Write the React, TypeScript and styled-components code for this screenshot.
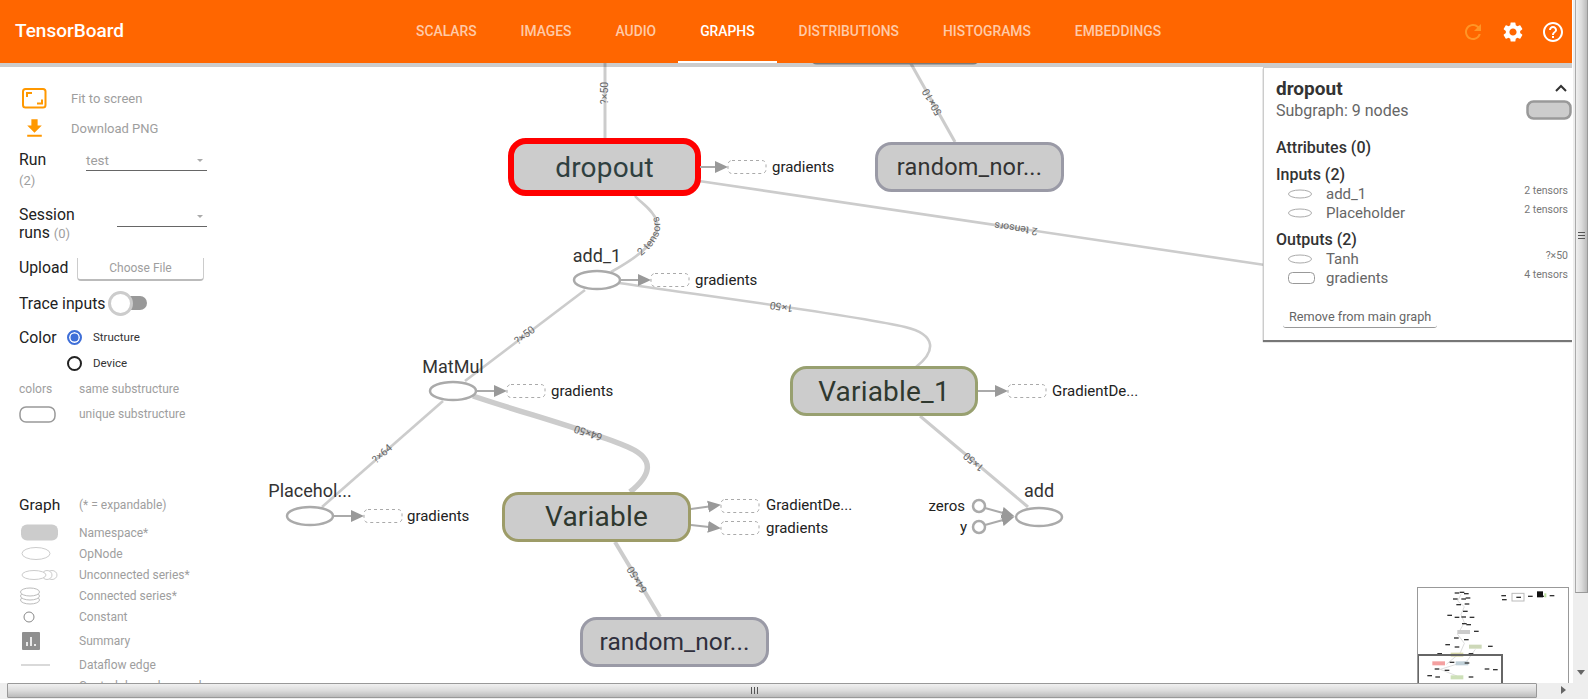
import React, { FC } from "react"
import styled, { createGlobalStyle } from "styled-components"
import { MdFileDownload, MdHelpOutline, MdRefresh, MdSettings } from "react-icons/md"

const GlobalStyle = createGlobalStyle`
  html, body {
    margin: 0;
    height: 100%;
    overflow: hidden;
    background: #fff;
    font-family: Roboto, "Liberation Sans", sans-serif;
  }
  #root { height: 100%; }
`

const Page = styled.div`
  display: grid;
  grid-template-columns: 1fr 16px;
  grid-template-rows: 1fr 16px;
  height: 699px;
  width: 1588px;
  overflow: hidden;
`

const Main = styled.div`
  display: flex;
  flex-direction: column;
  min-height: 0;
  min-width: 0;
  overflow: hidden;
`

const Header = styled.header`
  position: relative;
  z-index: 3;
  flex: 0 0 63px;
  display: flex;
  align-items: stretch;
  background: #ff6600;
  box-shadow: 0 4px 0 rgba(0, 0, 0, 0.2);
`

const Title = styled.div`
  flex: 0 0 394px;
  box-sizing: border-box;
  padding-left: 15px;
  line-height: 62px;
  font-size: 19px;
  font-weight: 500;
  color: #fff;
`

const Tabs = styled.nav`
  display: flex;
`

const Tab = styled.div<{ $active?: boolean }>`
  padding: 0 22px;
  line-height: 62px;
  font-size: 13.87px;
  font-weight: 500;
  text-transform: uppercase;
  color: ${({ $active }) => ($active ? "#fff" : "rgba(255, 255, 255, 0.66)")};
  border-bottom: 2px solid ${({ $active }) => ($active ? "#fff" : "transparent")};
  height: 61px;
`

const HeaderIcons = styled.div`
  margin-left: auto;
  display: flex;
  align-items: center;
  gap: 16px;
  padding-right: 7px;
  font-size: 24px;
  color: #fff;
  svg { display: block; }
`

const RefreshIcon = styled(MdRefresh)`
  color: #ff9526;
`

const Body = styled.div`
  flex: 1;
  display: flex;
  min-height: 0;
  position: relative;
`

const Sidebar = styled.aside`
  flex: 0 0 238px;
  box-sizing: border-box;
  padding: 20px 0 0 19px;
  overflow: hidden;
  background: #fff;
  font-size: 15.8px;
  color: #222;
`

const ToolRow = styled.div`
  display: flex;
  align-items: center;
  height: 30px;
  margin-left: 2px;
  font-size: 13px;
  color: #9e9e9e;
`

const ToolIcon = styled.span`
  flex: 0 0 50px;
  display: flex;
  padding-left: 1px;
  box-sizing: border-box;
  svg { display: block; }
`

const ControlRow = styled.div<{ $top: number }>`
  display: flex;
  align-items: flex-start;
  margin-top: ${({ $top }) => $top}px;
  width: 188px;
`

const FieldLabel = styled.div<{ $width: number; $line?: number }>`
  flex: 0 0 ${({ $width }) => $width}px;
  line-height: ${({ $line }) => $line ?? 20}px;
`

const Count = styled.span`
  color: #9e9e9e;
  font-size: 13px;
`

const SelectBox = styled.div`
  flex: 1;
  height: 20px;
  display: flex;
  align-items: center;
  border-bottom: 1px solid #666;
  font-size: 13.5px;
  color: #9e9e9e;
  &::after {
    content: "";
    margin: 0 4px 0 auto;
    border-left: 3.5px solid transparent;
    border-right: 3.5px solid transparent;
    border-top: 3.5px solid #aaa;
  }
`

const ChooseButton = styled.div`
  flex: 0 0 127px;
  box-sizing: border-box;
  height: 23px;
  margin-left: -2px;
  text-align: center;
  line-height: 20px;
  font-size: 12px;
  color: #9e9e9e;
  border: 1px solid #ccc;
  border-top: none;
  border-bottom: 2px solid #bbb;
  border-radius: 0 0 4px 4px;
`

const ToggleRow = styled.div`
  display: flex;
  align-items: center;
  height: 24px;
  margin-top: 10px;
`

const Toggle = styled.span`
  position: relative;
  margin-left: 14px;
  width: 27px;
  height: 14px;
  border-radius: 7px;
  background: #999;
  &::before {
    content: "";
    position: absolute;
    left: -12px;
    top: -5px;
    width: 19px;
    height: 19px;
    border-radius: 50%;
    background: #fff;
    border: 3px solid #ccc;
  }
`

const RadioRow = styled.div<{ $top?: number }>`
  display: flex;
  align-items: center;
  height: 26px;
  margin-top: ${({ $top }) => $top ?? 0}px;
`

const RadioLabel = styled.div`
  flex: 0 0 48px;
`

const Radio = styled.span<{ $checked?: boolean }>`
  box-sizing: border-box;
  flex: 0 0 15px;
  height: 15px;
  border-radius: 50%;
  border: 2px solid ${({ $checked }) => ($checked ? "#3f6fd8" : "#222")};
  background: ${({ $checked }) => ($checked ? "#3f6fd8" : "#fff")};
  box-shadow: ${({ $checked }) => ($checked ? "inset 0 0 0 1.5px #fff" : "none")};
`

const RadioText = styled.span`
  margin-left: 11px;
  font-size: 11.5px;
  color: #333;
`

const LegendRow = styled.div<{ $height?: number; $top?: number }>`
  display: flex;
  align-items: center;
  height: ${({ $height }) => $height ?? 21}px;
  margin-top: ${({ $top }) => $top ?? 0}px;
  font-size: 12px;
  color: #9e9e9e;
  white-space: nowrap;
`

const LegendKey = styled.span<{ $dark?: boolean }>`
  flex: 0 0 60px;
  display: flex;
  align-items: center;
  font-size: ${({ $dark }) => ($dark ? "15.5px" : "12px")};
  color: ${({ $dark }) => ($dark ? "#222" : "#9e9e9e")};
  svg { display: block; }
`

const Canvas = styled.div`
  flex: 1;
  position: relative;
  min-width: 0;
  overflow: hidden;
  svg { display: block; }
`

const EdgeLine = styled.path<{ $width?: number }>`
  fill: none;
  stroke: #ccc;
  stroke-width: ${({ $width }) => $width ?? 2.6}px;
`

const EdgeLabel = styled.text`
  font-size: 10.5px;
  fill: #666;
  text-anchor: middle;
`

const NodeRect = styled.rect<{ $stroke: string; $width?: number }>`
  fill: #ccc;
  stroke: ${({ $stroke }) => $stroke};
  stroke-width: ${({ $width }) => $width ?? 3}px;
`

const NodeTitle = styled.text<{ $fill: string; $size?: number; $spacing?: number }>`
  font-size: ${({ $size }) => $size ?? 28}px;
  letter-spacing: ${({ $spacing }) => $spacing ?? 0.2}px;
  text-anchor: middle;
  fill: ${({ $fill }) => $fill};
`

const OpEllipse = styled.ellipse`
  fill: #fff;
  stroke: #aaa;
  stroke-width: 2.5px;
`

const OpLabel = styled.text`
  font-size: 18px;
  text-anchor: middle;
  fill: #333;
`

const StubLine = styled.path`
  fill: none;
  stroke: #aaa;
  stroke-width: 2px;
  marker-end: url(#arrowhead);
`

const StubBox = styled.rect`
  fill: #fff;
  stroke: #aaa;
  stroke-width: 1px;
  stroke-dasharray: 3 3;
`

const StubLabel = styled.text<{ $anchor?: string }>`
  font-size: 15px;
  fill: #222;
  dominant-baseline: central;
  text-anchor: ${({ $anchor }) => $anchor ?? "start"};
`

const ConstCircle = styled.circle`
  fill: #fff;
  stroke: #aaa;
  stroke-width: 2.5px;
`

const InfoPanel = styled.section`
  position: absolute;
  z-index: 2;
  top: 4px;
  right: 0;
  width: 309px;
  height: 273px;
  box-sizing: border-box;
  padding: 8px 4px 0 12px;
  background: #fff;
  border-left: 1px solid #ccc;
  border-top: 1px solid #ccc;
  box-shadow: 0 2px 1px #777;
  color: #333;
`

const PanelTop = styled.div`
  display: flex;
  justify-content: space-between;
  align-items: center;
  height: 24px;
  font-size: 19px;
  font-weight: 700;
`

const SubRow = styled.div`
  display: flex;
  justify-content: space-between;
  align-items: center;
  height: 20px;
  margin-right: -4px;
  font-size: 16px;
  color: #666;
  svg { display: block; }
`

const SectionTitle = styled.div<{ $top: number }>`
  margin-top: ${({ $top }) => $top}px;
  height: 19px;
  line-height: 20px;
  font-size: 16px;
  font-weight: 500;
`

const NodeRow = styled.div`
  display: flex;
  align-items: center;
  height: 19px;
  padding-left: 12px;
  font-size: 15px;
  color: #666;
  svg { display: block; }
`

const NodeRowIcon = styled.span`
  flex: 0 0 38px;
`

const NodeRowShape = styled.span`
  margin-left: auto;
  margin-top: -6px;
  font-size: 10.5px;
  color: #777;
`

const RemoveButton = styled.div`
  display: inline-block;
  margin: 19px 0 0 7px;
  padding: 0 6px;
  height: 21px;
  line-height: 21px;
  font-size: 12.7px;
  color: #666;
  border-bottom: 1px solid #999;
  border-radius: 0 0 3px 3px;
`

const Minimap = styled.div`
  position: absolute;
  z-index: 2;
  right: 3px;
  bottom: 0;
  width: 152px;
  height: 96px;
  box-sizing: border-box;
  background: #fff;
  border: 1px solid #999;
  border-bottom: none;
  overflow: hidden;
`

const MiniViewport = styled.div`
  position: absolute;
  left: -1px;
  top: 66px;
  width: 82px;
  height: 40px;
  border: 2px solid #666;
  border-bottom: none;
`

const VerticalBar = styled.div`
  display: flex;
  flex-direction: column;
  background: #eee;
  border-left: 1px solid #fff;
`

const VerticalThumb = styled.div`
  flex: 0 0 593px;
  box-sizing: border-box;
  margin-left: 2px;
  padding-top: 232px;
  background: linear-gradient(90deg, #f0f0f0, #dcdcdc 50%, #bbb);
  border-right: 1px solid #999;
  border-bottom: 1px solid #999;
  border-left: 1px solid #aaa;
`

const Grip = styled.div`
  width: 7px;
  height: 7px;
  margin: 0 auto;
  background: repeating-linear-gradient(180deg, #555 0 1px, transparent 1px 3px);
`

const DownArrow = styled.div`
  margin: 77px auto 0;
  border-left: 4px solid transparent;
  border-right: 4px solid transparent;
  border-top: 5px solid #666;
`

const HorizontalBar = styled.div`
  display: flex;
  align-items: stretch;
  background: #eee;
`

const HorizontalThumb = styled.div`
  flex: 0 0 1530px;
  margin-left: 7px;
  box-sizing: border-box;
  display: flex;
  align-items: center;
  justify-content: center;
  height: 15px;
  padding-right: 36px;
  background: linear-gradient(180deg, #f0f0f0, #dcdcdc 50%, #bbb);
  border: 1px solid #999;
  border-radius: 1px;
`

const HGrip = styled.div`
  width: 7px;
  height: 7px;
  background: repeating-linear-gradient(90deg, #555 0 1px, transparent 1px 3px);
`

const RightArrow = styled.div`
  margin: 3px 0 0 24px;
  align-self: flex-start;
  border-top: 4px solid transparent;
  border-bottom: 4px solid transparent;
  border-left: 5px solid #666;
`

const Corner = styled.div`
  background: #eee;
`

interface EdgeSpec {
  id: string
  d: string
  label?: string
  offset?: number
  width?: number
}

const edges: EdgeSpec[] = [
  { id: "e1", d: "M605 138 L605 48", label: "?×50", width: 3 },
  { id: "e2", d: "M955 142 L910 62", label: "50×10", width: 3 },
  { id: "e3", d: "M1265 265 L699 181", label: "2 tensors", offset: 44 },
  { id: "e4", d: "M611 272 C640 256 660 240 657 222 C654 210 640 202 635 196", label: "2 tensors", offset: 52 },
  { id: "e5", d: "M916 367 C935 352 938 335 905 327 C860 316 700 295 619 283", label: "1×50", offset: 53 },
  { id: "e6", d: "M465 381 L585 290", label: "?×50" },
  { id: "e7", d: "M322 507 L443 401", label: "?×64" },
  { id: "e8", d: "M630 492 C650 476 656 460 630 448 C600 434 520 412 473 396", label: "64×50", offset: 46, width: 5.5 },
  { id: "e9", d: "M660 617 L615 542", label: "64×50", width: 4 },
  { id: "e10", d: "M1028 507 L920 416", label: "1×50", width: 3 },
]

const namespaces = [
  { x: 511, y: 141, w: 187, h: 52, title: "dropout", stroke: "#f00", width: 6, fill: "#2f4040", ty: 177 },
  { x: 876.5, y: 143.5, w: 186, h: 47, title: "random_nor...", stroke: "#9a9aa6", fill: "#333", ty: 175, size: 23.5, spacing: 0.2 },
  { x: 791.5, y: 367.5, w: 185, h: 47, title: "Variable_1", stroke: "#98a070", fill: "#2f382f", ty: 401 },
  { x: 503.5, y: 493.5, w: 186, h: 47, title: "Variable", stroke: "#9d9c68", fill: "#2f382f", ty: 526 },
  { x: 581.5, y: 618.5, w: 186, h: 47, title: "random_nor...", stroke: "#9a9aa6", fill: "#2f2f3c", ty: 650, size: 24.5, spacing: 0.1 },
]

const ops = [
  { cx: 597, cy: 280, title: "add_1", ty: 262 },
  { cx: 453, cy: 391, title: "MatMul", ty: 373 },
  { cx: 310, cy: 516, title: "Placehol...", ty: 497 },
  { cx: 1039, cy: 517, title: "add", ty: 497 },
]

const stubs = [
  { d: "M700 167 L716 167", x: 728, y: 160.5, label: "gradients", lx: 772, ly: 167 },
  { d: "M621 280 L639 280", x: 651, y: 273.5, label: "gradients", lx: 695, ly: 280 },
  { d: "M477 391 L495 391", x: 507, y: 384.5, label: "gradients", lx: 551, ly: 391 },
  { d: "M334 516 L352 516", x: 364, y: 509.5, label: "gradients", lx: 407, ly: 516 },
  { d: "M978 391 L996 391", x: 1008, y: 384.5, label: "GradientDe...", lx: 1052, ly: 391 },
  { d: "M691 509 L709 506.5", x: 721, y: 499.5, label: "GradientDe...", lx: 766, ly: 505 },
  { d: "M691 525 L709 527", x: 721, y: 521.5, label: "gradients", lx: 766, ly: 528 },
]

const GraphDrawing: FC = () => (
  <svg width={1334} height={620} viewBox="238 63 1334 620">
    <defs>
      <marker id="arrowhead" markerUnits="userSpaceOnUse" markerWidth="14" markerHeight="13" refX="1" refY="6.5" orient="auto">
        <path d="M0 0.5 L13 6.5 L0 12.5 Z" fill="#999" />
      </marker>
    </defs>
    {edges.map(({ id, d, width }) => (
      <EdgeLine key={id} id={id} d={d} $width={width} />
    ))}
    {edges.map(({ id, label, offset }) => (
      <EdgeLabel key={id} dy={3}>
        <textPath href={`#${id}`} startOffset={`${offset ?? 50}%`}>
          {label}
        </textPath>
      </EdgeLabel>
    ))}
    <NodeRect x={811} y={20} width={168} height={43} rx={6} $stroke="#999" />
    {namespaces.map((n) => (
      <g key={`${n.title}${n.x}`}>
        <NodeRect x={n.x} y={n.y} width={n.w} height={n.h} rx={15} $stroke={n.stroke} $width={n.width} />
        <NodeTitle x={n.x + n.w / 2} y={n.ty} $fill={n.fill} $size={n.size} $spacing={n.spacing}>
          {n.title}
        </NodeTitle>
      </g>
    ))}
    {ops.map((o) => (
      <g key={o.title}>
        <OpEllipse cx={o.cx} cy={o.cy} rx={23} ry={9} />
        <OpLabel x={o.cx} y={o.ty}>
          {o.title}
        </OpLabel>
      </g>
    ))}
    {stubs.map((s) => (
      <g key={`${s.lx}${s.ly}`}>
        <StubLine d={s.d} />
        <StubBox x={s.x} y={s.y} width={38} height={13} rx={4} />
        <StubLabel x={s.lx} y={s.ly}>
          {s.label}
        </StubLabel>
      </g>
    ))}
    <ConstCircle cx={979} cy={506} r={6} />
    <ConstCircle cx={979} cy={527} r={6} />
    <StubLabel x={965} y={506} $anchor="end">
      zeros
    </StubLabel>
    <StubLabel x={967} y={527} $anchor="end">
      y
    </StubLabel>
    <StubLine d="M985 508 L1003 513" />
    <StubLine d="M985 525 L1003 520" />
  </svg>
)

const miniMarks = [
  [365, 68], [350, 70], [378, 72], [345, 88], [370, 88], [383, 85], [355, 105], [380, 103], [375, 125],
  [328, 137], [350, 143], [370, 142], [395, 143], [372, 162], [385, 165], [408, 185], [348, 205], [378, 210],
  [450, 230], [322, 225], [350, 232], [298, 252], [350, 255], [392, 252], [420, 255], [440, 255], [335, 278],
  [380, 280], [440, 298], [465, 300], [290, 298], [320, 302], [268, 318], [292, 322], [392, 322], [490, 78],
  [492, 90], [535, 83], [570, 80], [598, 75], [604, 80], [635, 78],
]

const miniBoxes = [
  { x: 370, y: 188, fill: "#ccc" },
  { x: 405, y: 232, fill: "#cdd8b8" },
  { x: 350, y: 256, fill: "#d8d8a8" },
  { x: 295, y: 282, fill: "#f4a0a0" },
  { x: 365, y: 282, fill: "#c0d0d8" },
  { x: 350, y: 324, fill: "#cde0b8" },
]

const MinimapDrawing: FC = () => (
  <svg width={150} height={95} viewBox="233 56 450 285">
    <path
      d="M362 75 L352 95 L372 112 L362 135 L372 160 L352 195 L372 222 L360 250 L318 285 M405 240 L380 275 L300 300 L350 320"
      fill="none"
      stroke="#ccc"
      strokeWidth={2}
    />
    {miniBoxes.map((b) => (
      <rect key={`${b.x}${b.y}`} x={b.x - 19} y={b.y - 6} width={38} height={12} fill={b.fill} />
    ))}
    <rect x={515} y={72} width={36} height={23} fill="none" stroke="#bbb" strokeWidth={3} />
    {miniMarks.map(([x, y]) => (
      <rect key={`${x}${y}`} x={x - 7} y={y - 1} width={14} height={4} fill="#333" />
    ))}
    <rect x={590} y={66} width={18} height={18} fill="#111" />
    <rect x={612} y={72} width={6} height={12} fill="#bde0a0" />
  </svg>
)

const SmallEllipse: FC = () => (
  <svg width="26" height="10">
    <ellipse cx="12" cy="5" rx="11.5" ry="4" fill="#fff" stroke="#aaa" strokeWidth="1" />
  </svg>
)

const App: FC = () => (
  <Page>
    <GlobalStyle />
    <Main>
      <Header>
        <Title>TensorBoard</Title>
        <Tabs>
          <Tab>Scalars</Tab>
          <Tab>Images</Tab>
          <Tab>Audio</Tab>
          <Tab $active>Graphs</Tab>
          <Tab>Distributions</Tab>
          <Tab>Histograms</Tab>
          <Tab>Embeddings</Tab>
        </Tabs>
        <HeaderIcons>
          <RefreshIcon />
          <MdSettings />
          <MdHelpOutline />
        </HeaderIcons>
      </Header>
      <Body>
        <Sidebar>
          <ToolRow>
            <ToolIcon>
              <svg width="25" height="21" viewBox="0 0 25 21">
                <rect x="1" y="1" width="22.5" height="18.5" rx="2.5" fill="none" stroke="#ff9800" strokeWidth="2" />
                <path d="M5 9 V5 H10 M20 11.5 V15.5 H15" fill="none" stroke="#ff9800" strokeWidth="2" />
              </svg>
            </ToolIcon>
            Fit to screen
          </ToolRow>
          <ToolRow>
            <ToolIcon>
              <MdFileDownload size={25} color="#ff9800" />
            </ToolIcon>
            Download PNG
          </ToolRow>
          <ControlRow $top={7}>
            <FieldLabel $width={67}>
              Run
              <br />
              <Count>(2)</Count>
            </FieldLabel>
            <SelectBox>test</SelectBox>
          </ControlRow>
          <ControlRow $top={15}>
            <FieldLabel $width={98} $line={18}>
              Session
              <br />
              runs <Count>(0)</Count>
            </FieldLabel>
            <SelectBox />
          </ControlRow>
          <ControlRow $top={15}>
            <FieldLabel $width={60}>Upload</FieldLabel>
            <ChooseButton>Choose File</ChooseButton>
          </ControlRow>
          <ToggleRow>
            Trace inputs
            <Toggle />
          </ToggleRow>
          <RadioRow $top={9}>
            <RadioLabel>Color</RadioLabel>
            <Radio $checked />
            <RadioText>Structure</RadioText>
          </RadioRow>
          <RadioRow>
            <RadioLabel />
            <Radio />
            <RadioText>Device</RadioText>
          </RadioRow>
          <LegendRow $height={26}>
            <LegendKey>colors</LegendKey>
            same substructure
          </LegendRow>
          <LegendRow $height={24}>
            <LegendKey>
              <svg width="38" height="17">
                <rect x="1" y="1" width="35" height="15" rx="6" fill="#fff" stroke="#999" strokeWidth="1.5" />
              </svg>
            </LegendKey>
            unique substructure
          </LegendRow>
          <LegendRow $top={68} $height={22}>
            <LegendKey $dark>Graph</LegendKey>
            (* = expandable)
          </LegendRow>
          <LegendRow $top={6}>
            <LegendKey>
              <svg width="40" height="17">
                <rect x="2" y="0.5" width="37" height="16" rx="6" fill="#ccc" />
              </svg>
            </LegendKey>
            Namespace*
          </LegendRow>
          <LegendRow>
            <LegendKey>
              <svg width="34" height="15">
                <ellipse cx="17" cy="7.5" rx="14" ry="6" fill="#fff" stroke="#ccc" strokeWidth="1" />
              </svg>
            </LegendKey>
            OpNode
          </LegendRow>
          <LegendRow>
            <LegendKey>
              <svg width="42" height="12">
                <ellipse cx="33" cy="6" rx="5" ry="4.5" fill="#fff" stroke="#ccc" />
                <ellipse cx="28" cy="6" rx="5" ry="4.5" fill="#fff" stroke="#ccc" />
                <ellipse cx="15" cy="6" rx="12" ry="4.5" fill="#fff" stroke="#ccc" />
              </svg>
            </LegendKey>
            Unconnected series*
          </LegendRow>
          <LegendRow>
            <LegendKey>
              <svg width="34" height="20" viewBox="0 0 34 20">
                <ellipse cx="11" cy="14" rx="9.5" ry="4" fill="#fff" stroke="#bbb" />
                <ellipse cx="11" cy="10" rx="9.5" ry="4" fill="#fff" stroke="#bbb" />
                <ellipse cx="11" cy="6" rx="9.5" ry="4" fill="#fff" stroke="#bbb" />
              </svg>
            </LegendKey>
            Connected series*
          </LegendRow>
          <LegendRow>
            <LegendKey>
              <svg width="22" height="12">
                <circle cx="10" cy="6" r="5" fill="#fff" stroke="#888" strokeWidth="1" />
              </svg>
            </LegendKey>
            Constant
          </LegendRow>
          <LegendRow $height={27}>
            <LegendKey>
              <svg width="24" height="18">
                <rect x="3" y="0" width="18" height="18" rx="1" fill="#8f8f8f" />
                <path d="M8 14 V10 M12 14 V5 M16 14 V12" stroke="#fff" strokeWidth="1.6" />
              </svg>
            </LegendKey>
            Summary
          </LegendRow>
          <LegendRow>
            <LegendKey>
              <svg width="34" height="4">
                <path d="M2 2 H31" stroke="#ccc" strokeWidth="1.5" />
              </svg>
            </LegendKey>
            Dataflow edge
          </LegendRow>
          <LegendRow>
            <LegendKey />
            Control dependency edge
          </LegendRow>
        </Sidebar>
        <Canvas>
          <GraphDrawing />
          <InfoPanel>
            <PanelTop>
              dropout
              <svg width="14" height="10" viewBox="0 0 14 10">
                <path d="M2 8 L7 3 L12 8" fill="none" stroke="#333" strokeWidth="2" />
              </svg>
            </PanelTop>
            <SubRow>
              Subgraph: 9 nodes
              <svg width="46" height="20">
                <rect x="1.5" y="1.5" width="43" height="17" rx="6" fill="#ccc" stroke="#999" strokeWidth="2.5" />
              </svg>
            </SubRow>
            <SectionTitle $top={18}>Attributes (0)</SectionTitle>
            <SectionTitle $top={8}>Inputs (2)</SectionTitle>
            <NodeRow>
              <NodeRowIcon>
                <SmallEllipse />
              </NodeRowIcon>
              add_1
              <NodeRowShape>2 tensors</NodeRowShape>
            </NodeRow>
            <NodeRow>
              <NodeRowIcon>
                <SmallEllipse />
              </NodeRowIcon>
              Placeholder
              <NodeRowShape>2 tensors</NodeRowShape>
            </NodeRow>
            <SectionTitle $top={8}>Outputs (2)</SectionTitle>
            <NodeRow>
              <NodeRowIcon>
                <SmallEllipse />
              </NodeRowIcon>
              Tanh
              <NodeRowShape>?×50</NodeRowShape>
            </NodeRow>
            <NodeRow>
              <NodeRowIcon>
                <svg width="28" height="12">
                  <rect x="0.5" y="0.5" width="26" height="11" rx="4" fill="#fff" stroke="#999" />
                </svg>
              </NodeRowIcon>
              gradients
              <NodeRowShape>4 tensors</NodeRowShape>
            </NodeRow>
            <RemoveButton>Remove from main graph</RemoveButton>
          </InfoPanel>
          <Minimap>
            <MinimapDrawing />
            <MiniViewport />
          </Minimap>
        </Canvas>
      </Body>
    </Main>
    <VerticalBar>
      <VerticalThumb>
        <Grip />
      </VerticalThumb>
      <DownArrow />
    </VerticalBar>
    <HorizontalBar>
      <HorizontalThumb>
        <HGrip />
      </HorizontalThumb>
      <RightArrow />
    </HorizontalBar>
    <Corner />
  </Page>
)

export default App
